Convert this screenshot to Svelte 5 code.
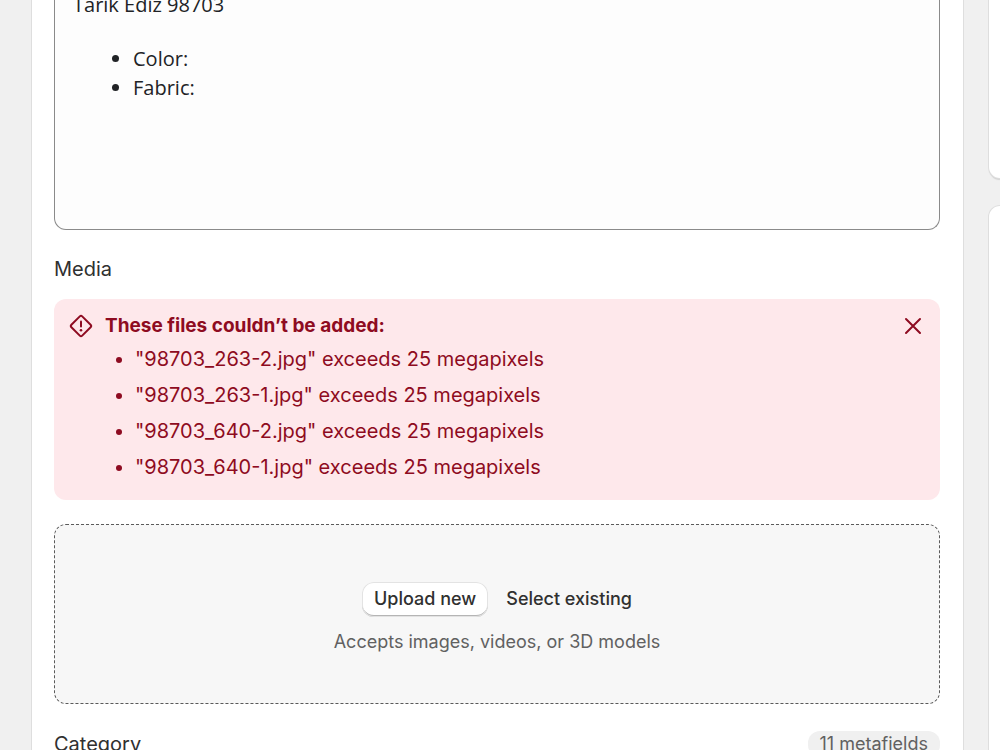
<script>
  const description = {
    title: "Tarik Ediz 98703",
    details: ["Color:", "Fabric:"],
  };

  const rejectedFiles = [
    "98703_263-2.jpg",
    "98703_263-1.jpg",
    "98703_640-2.jpg",
    "98703_640-1.jpg",
  ];

  let showBanner = $state(true);
</script>

<div class="page">
  <main class="card product">
    <section class="editor">
      <p>{description.title}</p>
      <ul>
        {#each description.details as detail}
          <li>{detail}</li>
        {/each}
      </ul>
    </section>

    <h2 class="label media-label">Media</h2>

    {#if showBanner}
      <section class="banner" role="alert">
        <svg class="banner-icon" viewBox="0 0 24 24" aria-hidden="true">
          <path d="M10.8 2.4a1.7 1.7 0 0 1 2.4 0l8.4 8.4a1.7 1.7 0 0 1 0 2.4l-8.4 8.4a1.7 1.7 0 0 1-2.4 0l-8.4-8.4a1.7 1.7 0 0 1 0-2.4z" />
          <path d="M12 7.4v5.2" />
          <circle cx="12" cy="16.2" r="1.3" />
        </svg>
        <div class="banner-content">
          <h3>These files couldn’t be added:</h3>
          <ul>
            {#each rejectedFiles as file}
              <li>"{file}" exceeds 25 megapixels</li>
            {/each}
          </ul>
        </div>
        <button class="dismiss" aria-label="Dismiss" onclick={() => (showBanner = false)}>
          <svg viewBox="0 0 18 18" aria-hidden="true">
            <path d="M2 2l14 14M16 2L2 16" />
          </svg>
        </button>
      </section>
    {/if}

    <section class="dropzone">
      <div class="actions">
        <button class="upload">Upload new</button>
        <button class="select">Select existing</button>
      </div>
      <p>Accepts images, videos, or 3D models</p>
    </section>

    <div class="category">
      <h2 class="label">Category</h2>
      <span class="badge">11 metafields</span>
    </div>
  </main>

  <aside>
    <div class="card side-top"></div>
    <div class="card side-bottom"></div>
  </aside>
</div>

<style>
  :global(body) {
    margin: 0;
    overflow: hidden;
    background: #f0f0f0;
  }

  .page {
    display: grid;
    grid-template-columns: minmax(0, 1fr) 11px;
    gap: 26px;
    height: 100vh;
    padding-left: 32px;
    overflow: hidden;
    color: #303030;
    font-family: Inter, sans-serif;
    font-size: 20px;
    line-height: 30px;
  }

  h2,
  h3,
  p,
  ul {
    margin: 0;
  }

  button {
    border: none;
    background: none;
    color: inherit;
    font: inherit;
    cursor: pointer;
  }

  .card {
    background: #fff;
    box-shadow: 0 0 0 1px #dedede, 0 2px 1px #d0d0d0;
  }

  .product {
    padding: 0 23px 0 22px;
  }

  .editor {
    box-sizing: border-box;
    height: 230px;
    padding: 0 18px;
    overflow: hidden;
    border: 1px solid #8a8a8a;
    border-top: none;
    border-radius: 0 0 12px 12px;
    background: #fdfdfd;
    color: #212326;
    font-family: "Segoe UI", "Open Sans", sans-serif;
    font-size: 20px;
    line-height: 29px;
  }

  /* the editor is scrolled, its first line is half out of view */
  .editor p {
    margin-top: -10px;
    margin-bottom: 25px;
  }

  .editor ul {
    padding-left: 60px;
  }

  .label {
    font-size: 20px;
    font-weight: 400;
  }

  .media-label {
    margin: 24px 0 15px;
  }

  .banner {
    display: flex;
    align-items: flex-start;
    padding: 12px 16px 15px 15px;
    border-radius: 12px;
    background: #fee8eb;
    color: #8e0b21;
  }

  .banner-icon {
    width: 24px;
    height: 24px;
    margin: 3px 12px 0 0;
    fill: none;
    stroke: currentColor;
    stroke-width: 2;
    stroke-linecap: round;
  }

  .banner-icon circle {
    fill: currentColor;
    stroke: none;
  }

  .banner-content {
    flex: 1;
  }

  .banner h3 {
    font-size: 19px;
    font-weight: 700;
  }

  .banner ul {
    padding-left: 30px;
  }

  .banner li {
    line-height: 36px;
  }

  .dismiss {
    display: flex;
    margin-top: 4px;
    padding: 2px;
  }

  .dismiss svg {
    width: 18px;
    height: 18px;
    fill: none;
    stroke: currentColor;
    stroke-width: 2;
    stroke-linecap: round;
  }

  .dropzone {
    display: flex;
    flex-direction: column;
    align-items: center;
    justify-content: center;
    gap: 10px;
    box-sizing: border-box;
    height: 180px;
    margin-top: 24px;
    padding-top: 10px;
    border: 1px dashed #5a5a5a;
    border-radius: 12px;
    background: #f7f7f7;
  }

  .dropzone p {
    color: #616161;
    font-size: 18px;
  }

  .actions {
    display: flex;
    gap: 18px;
  }

  .actions button {
    height: 35px;
    padding: 0;
    font-size: 18px;
    font-weight: 550;
  }

  .actions .upload {
    padding: 0 12px;
    border-radius: 12px;
    background: #fff;
    box-shadow: inset 0 0 0 1px #e3e3e3, inset 0 -2px 0 #b5b5b5;
  }

  .category {
    display: flex;
    align-items: center;
    justify-content: space-between;
    margin-top: 25px;
  }

  .badge {
    padding: 0 12px;
    border-radius: 12px;
    background: #f0f0f0;
    color: #616161;
    font-size: 18px;
    line-height: 26px;
  }

  aside {
    display: grid;
    grid-template-rows: 178px 1fr;
    gap: 28px;
  }

  .side-top {
    border-radius: 0 0 0 18px;
  }

  .side-bottom {
    border-radius: 18px 0 0 0;
  }
</style>
